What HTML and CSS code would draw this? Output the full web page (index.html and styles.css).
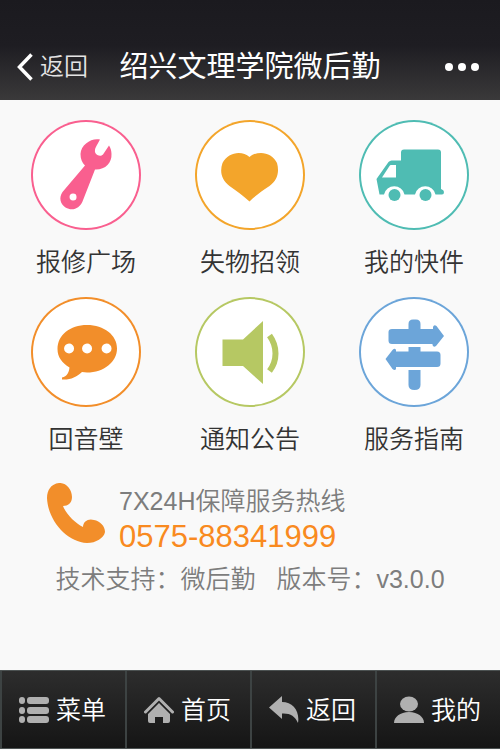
FILE: index.html
```html
<!DOCTYPE html>
<html lang="zh-CN">
<head>
<meta charset="utf-8">
<meta name="viewport" content="width=device-width, initial-scale=1">
<title>绍兴文理学院微后勤</title>
<link rel="stylesheet" href="styles.css">
</head>
<body>
<header class="topbar">
  <button class="back" type="button">
    <svg width="18" height="28" viewBox="0 0 18 28" aria-hidden="true"><path d="M15.500 1.500 3.500 14l12 12.500" fill="none" stroke="currentColor" stroke-width="3.500"/></svg>
    <span>返回</span>
  </button>
  <h1 class="title">绍兴文理学院微后勤</h1>
  <button class="more" type="button" aria-label="更多">
    <svg width="34" height="8" viewBox="0 0 34 8" fill="currentColor" aria-hidden="true"><circle cx="4" cy="4" r="4"/><circle cx="17" cy="4" r="4"/><circle cx="30" cy="4" r="4"/></svg>
  </button>
</header>

<main class="content">
  <nav class="services" aria-label="服务">
    <a class="service pink" href="#repair">
      <span class="disc"><svg viewBox="0 0 110 110" aria-hidden="true">
        <path fill="currentColor" fill-rule="evenodd" d="M69 19.500C61 17.500 50 24 49.500 34c0 5 1.500 8.500 4.500 11.500L31.500 72c-4 6-2 12 3 15.500 7 4 14 1 17-6L64 49.500C74 50 81 43 80.500 34c0-3-.8-6-2.500-8.500L72 34.500c-3 3-9 0-8-4.500.2-2 1-3 5-10.500zM42 73.500a3.500 3.500 0 1 0 .1 7 3.500 3.500 0 0 0-.1-7z"/>
      </svg></span>
      <span class="label">报修广场</span>
    </a>
    <a class="service amber" href="#lost">
      <span class="disc"><svg viewBox="0 0 110 110" aria-hidden="true">
        <path fill="currentColor" d="M54.500 37C47 30 33 32 27.500 43c-3 9-1 17 7 23 7 5 14 10 20 15.500C60 76 67 71 74.500 66c8-6 10-14 7.500-23-5-11-19-13-27.500-6z"/>
      </svg></span>
      <span class="label">失物招领</span>
    </a>
    <a class="service teal" href="#parcel">
      <span class="disc"><svg viewBox="0 0 110 110" aria-hidden="true">
        <path fill="currentColor" fill-rule="evenodd" d="M45 29.500h34q3 0 3 3V69q3 1 3 3 0 2.500-2 2.500h-6.500a10.500 10.500 0 0 0-20.500 0H45.500a10.500 10.500 0 0 0-20.500 0h-4.500L17.500 59l12-17q1.500-1.500 3-1.500H42v-8q0-3 3-3zM37 45h-5q-1 0-1.500 1L23 57.500h14z"/>
        <circle fill="currentColor" cx="35.500" cy="75" r="6"/><circle fill="currentColor" cx="66.500" cy="75" r="6"/>
      </svg></span>
      <span class="label">我的快件</span>
    </a>
    <a class="service orange" href="#echo">
      <span class="disc"><svg viewBox="0 0 110 110" aria-hidden="true">
        <path fill="currentColor" fill-rule="evenodd" d="M56 28c17 0 30 10 30 23.500S73 75.500 56 75.500l-5-.5c-6 5-11 8-20 7.500v-2c5-1 7-5 7.500-10C31 66 26.500 60 26.500 52 26.500 38 39 28 56 28zM38 46.500a5 5 0 1 0 .1 10 5 5 0 0 0-.1-10zM56 46.500a5 5 0 1 0 .1 10 5 5 0 0 0-.1-10zM75.500 46.500a5 5 0 1 0 .1 10 5 5 0 0 0-.1-10z"/>
      </svg></span>
      <span class="label">回音壁</span>
    </a>
    <a class="service green" href="#notice">
      <span class="disc"><svg viewBox="0 0 110 110" aria-hidden="true">
        <path fill="currentColor" d="M27.500 42.500H48L68 24v63L48 69H27.500z"/>
        <path fill="none" stroke="currentColor" stroke-width="6" d="M74.500 38.500c8 11 8 25 0 35.500"/>
      </svg></span>
      <span class="label">通知公告</span>
    </a>
    <a class="service blue" href="#guide">
      <span class="disc"><svg viewBox="0 0 110 110" fill="currentColor" aria-hidden="true">
        <path d="M49.500 32v-5q0-4.500 4.500-4.500h3q4.500 0 4.500 4.500v5H74v-2q1-3 3.500-1L85 39l-8 10q-2.500 2-3.500-1v-1H33q-3.500 0-3.500-3.500V35q0-3 3.500-3z"/>
        <path d="M49.500 50h12v4.500H78q3.500 0 3.500 3.500v8.500q0 3.500-3.500 3.500H37v2q-1 2-3.500 0L26.500 62l7-9q2.500-2.500 3.500 0v1.500h12.500z"/>
        <path d="M49.500 73h12v15q0 5-6 5t-6-5z"/>
      </svg></span>
      <span class="label">服务指南</span>
    </a>
  </nav>

  <section class="hotline">
    <svg class="phone" viewBox="0 0 58 60" aria-hidden="true">
      <path fill="currentColor" d="M12 0c7-.5 13 6 13 14 0 6-4 9-9 9 3 8 12 17 20 21 0-6 6-9 11-7 6 1 11 6 11 12-1 6-9 11-18 11C20 59 1 38 0 15 0 7 4 1 12 0z"/>
    </svg>
    <div class="hotline-text">
      <p class="hotline-name">7X24H保障服务热线</p>
      <a class="hotline-number" href="tel:0575-88341999">0575-88341999</a>
    </div>
  </section>
  <p class="support"><span>技术支持：微后勤</span><span>版本号：v3.0.0</span></p>
</main>

<nav class="tabbar" aria-label="导航">
  <a class="tab" href="#menu">
    <svg class="tab-icon" viewBox="0 0 30 28" fill="currentColor" aria-hidden="true"><rect x="0" y="1" width="6" height="7" rx="3"/><rect x="8" y="1" width="22" height="7" rx="3"/><rect x="0" y="11" width="6" height="7" rx="3"/><rect x="8" y="11" width="22" height="7" rx="3"/><rect x="0" y="20" width="6" height="7" rx="3"/><rect x="8" y="20" width="22" height="7" rx="3"/></svg>
    <span>菜单</span>
  </a>
  <a class="tab" href="#home">
    <svg class="tab-icon" viewBox="0 0 30 28" aria-hidden="true"><path d="M1.500 16 15 2.500 28.500 16" fill="none" stroke="currentColor" stroke-width="3" stroke-linecap="round" stroke-linejoin="round"/><path fill="currentColor" d="m15 7 11 11v7q0 2-2 2h-5v-6h-8v6H6q-2 0-2-2v-7z"/></svg>
    <span>首页</span>
  </a>
  <a class="tab" href="#back">
    <svg class="tab-icon" viewBox="0 0 30 28" fill="currentColor" aria-hidden="true"><path d="M0 11.500 13 0v6c11 0 18 9 16 21-3-7-8-10-16-9.500V23z"/></svg>
    <span>返回</span>
  </a>
  <a class="tab" href="#mine">
    <svg class="tab-icon" viewBox="0 0 30 28" fill="currentColor" aria-hidden="true"><ellipse cx="15" cy="8" rx="9" ry="7.500"/><path d="M0 27c0-6 6-11 15-11s15 5 15 11z"/></svg>
    <span>我的</span>
  </a>
</nav>
</body>
</html>
```

FILE: styles.css
```css
* {
  box-sizing: border-box;
}

body {
  display: flex;
  flex-direction: column;
  min-height: 100vh;
  margin: 0;
  padding-bottom: 1px;
  background: #f9f9f9;
  color: #333;
  font-family: "Liberation Sans", "Noto Sans CJK SC", sans-serif;
  font-size: 25px;
  font-weight: 350;
  line-height: 36px;
}

h1,
p {
  margin: 0;
}

a {
  color: inherit;
  text-decoration: none;
}

button {
  padding: 0;
  border: 0;
  background: none;
  color: inherit;
  font: inherit;
}

svg {
  display: block;
}

.topbar {
  display: grid;
  grid-template-columns: 1fr auto 1fr;
  align-items: center;
  padding: 49px 16px 15px;
  background: linear-gradient(#1b1a1f 0%, #1e1d22 45%, #3a393a 100%);
  color: #fff;
}

.back {
  display: flex;
  align-items: center;
  gap: 6px;
  justify-self: start;
  font-size: 24px;
}

.back span {
  color: #e4e4e4;
}

.title {
  font-size: 29px;
  font-weight: 400;
}

.more {
  justify-self: end;
  padding-right: 5px;
}

.content {
  flex: 1;
}

.services {
  display: grid;
  grid-template-columns: repeat(3, 1fr);
  row-gap: 17px;
  padding: 20px 4px 0;
}

.service {
  display: flex;
  flex-direction: column;
  align-items: center;
  gap: 14px;
}

.disc {
  width: 110px;
  border-radius: 50%;
  background: #fff;
  box-shadow: inset 0 0 0 2px currentColor;
}

.label {
  color: #333;
}

.pink { color: #f95f8f; }
.amber { color: #f3a52b; }
.teal { color: #4fbcb3; }
.orange { color: #f28e2a; }
.green { color: #b6c863; }
.blue { color: #6ca5d9; }

.hotline {
  display: flex;
  align-items: flex-start;
  gap: 14px;
  padding: 26px 47px 0;
}

.phone {
  width: 58px;
  height: 60px;
  color: #f28e2a;
}

.hotline-name,
.support {
  color: #7d7d7d;
}

.hotline-number {
  display: block;
  color: #f98a20;
  font-size: 31px;
}

.support {
  display: flex;
  justify-content: center;
  gap: 21px;
  padding-top: 6px;
}

.tabbar {
  display: grid;
  grid-template-columns: repeat(4, 1fr);
  border: solid #4c5252;
  border-width: 1px 0;
  background: linear-gradient(#2d2d2d, #151515);
  color: #fff;
}

.tab {
  display: flex;
  align-items: center;
  justify-content: center;
  gap: 7px;
  padding: 21px 2px 20px 0;
  border-left: 2px solid #3d4343;
}

.tab-icon {
  width: 30px;
  height: 28px;
  color: #b0b0b0;
}
```
